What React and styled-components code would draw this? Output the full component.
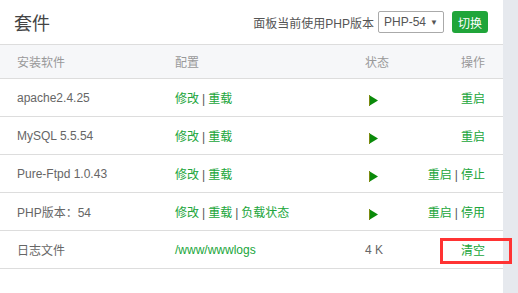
import React from "react";
import styled, { createGlobalStyle } from "styled-components";

const GlobalStyle = createGlobalStyle`
	html, body {
		margin: 0;
		padding: 0;
		background: #fff;
	}
	body {
		font-family: "Liberation Sans", "Noto Sans CJK SC", sans-serif;
		font-size: 12px;
		color: #666;
	}
`;

const Page = styled.div`
	display: flex;
	min-height: 100vh;
	position: relative;
`;

const Panel = styled.div`
	width: 503px;
	flex-shrink: 0;
	background: #fff;
`;

const Side = styled.div`
	flex: 1;
	background: #e6e9ee;
`;

const Header = styled.div`
	display: flex;
	justify-content: space-between;
	align-items: center;
	height: 44px;
	padding: 0 15px 0 14px;
	border-bottom: 1px solid #ddd;
`;

const Title = styled.span`
	font-size: 18px;
	color: #444;
	padding-bottom: 1px;
`;

const Tools = styled.div`
	display: flex;
	align-items: center;
	gap: 4px;
	flex-shrink: 0;
	color: #555;
	white-space: nowrap;
`;

const Select = styled.div`
	display: flex;
	align-items: center;
	justify-content: space-between;
	box-sizing: border-box;
	width: 66px;
	height: 22px;
	padding: 0 5px 0 5px;
	border: 1px solid #aaa;
	border-radius: 2px;
	font-size: 12px;
	color: #555;
`;

const Arrow = styled.span`
	font-size: 8px;
	color: #555;
`;

const Button = styled.button`
	height: 22px;
	width: 36px;
	margin-left: 4px;
	padding: 0;
	border: none;
	border-radius: 3px;
	background: #20a53a;
	color: #fff;
	font-family: inherit;
	font-size: 12px;
`;

const Row = styled.div`
	display: grid;
	grid-template-columns: 159px 190px minmax(0, 1fr) auto;
	align-items: center;
	height: ${({ head }) => (head ? "33px" : "37px")};
	border-bottom: 1px solid #ddd;
	background: ${({ head }) => (head ? "#f6f7f9" : "#fff")};
	color: ${({ head }) => (head ? "#999" : "#666")};
`;

const Cell = styled.div`
	padding: 0 ${({ right }) => (right ? "18px" : "16px")} 0 ${({ first }) => (first ? "17px" : "16px")};
	text-align: ${({ right }) => (right ? "right" : "left")};
	white-space: nowrap;
`;

const Link = styled.span`
	color: #20a53a;
`;

const Sep = styled.span`
	color: #555;
	margin: 0 3px;
`;

const Play = styled.svg`
	display: block;
	margin: 5px 0 0 4px;
`;

const Marker = styled.div`
	position: absolute;
	left: 440px;
	top: 238px;
	width: 72px;
	height: 26px;
	box-sizing: border-box;
	border: 3px solid #f33;
`;

const Links = ({ items }) =>
	items.map((t, i) => (
		<React.Fragment key={t}>
			{i > 0 && <Sep>|</Sep>}
			<Link>{t}</Link>
		</React.Fragment>
	));

const PlayIcon = () => (
	<Play width="10" height="11" viewBox="0 0 10 11">
		<polygon points="0,0 9,5.5 0,11" fill="#0a8a0a" />
		<rect x="0" y="0" width="1" height="11" fill="#7a8a10" />
	</Play>
);

const rows = [
	{ name: "apache2.4.25", conf: ["修改", "重载"], ops: ["重启"] },
	{ name: "MySQL 5.5.54", conf: ["修改", "重载"], ops: ["重启"] },
	{ name: "Pure-Ftpd 1.0.43", conf: ["修改", "重载"], ops: ["重启", "停止"] },
	{ name: "PHP版本：54", conf: ["修改", "重载", "负载状态"], ops: ["重启", "停用"] },
];

export default function App() {
	return (
		<>
			<GlobalStyle />
			<Page>
				<Panel>
					<Header>
						<Title>套件</Title>
						<Tools>
							<span>面板当前使用PHP版本</span>
							<Select>
								<span>PHP-54</span>
								<Arrow>▼</Arrow>
							</Select>
							<Button>切换</Button>
						</Tools>
					</Header>
					<Row head>
						<Cell first>安装软件</Cell>
						<Cell>配置</Cell>
						<Cell>状态</Cell>
						<Cell right>操作</Cell>
					</Row>
					{rows.map((r) => (
						<Row key={r.name}>
							<Cell first>{r.name}</Cell>
							<Cell>
								<Links items={r.conf} />
							</Cell>
							<Cell>
								<PlayIcon />
							</Cell>
							<Cell right>
								<Links items={r.ops} />
							</Cell>
						</Row>
					))}
					<Row>
						<Cell first>日志文件</Cell>
						<Cell>
							<Link>/www/wwwlogs</Link>
						</Cell>
						<Cell>4 K</Cell>
						<Cell right>
							<Link>清空</Link>
						</Cell>
					</Row>
				</Panel>
				<Side />
				<Marker />
			</Page>
		</>
	);
}
